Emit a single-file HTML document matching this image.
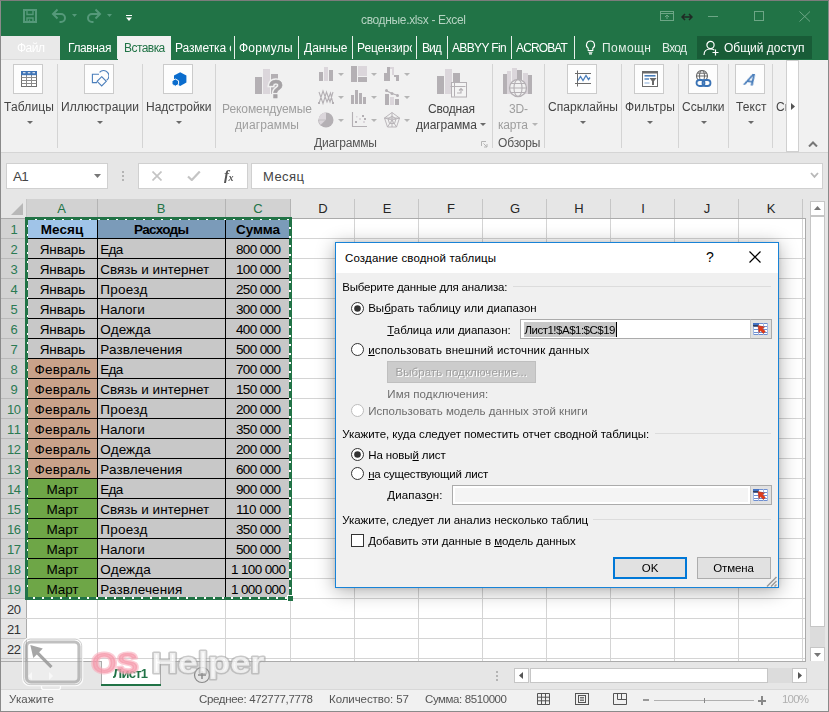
<!DOCTYPE html>
<html lang="ru"><head><meta charset="utf-8"><title>сводные.xlsx - Excel</title>
<style>
html,body{margin:0;padding:0;}
body{width:829px;height:712px;overflow:hidden;background:#e6e6e6;font-family:'Liberation Sans', sans-serif;position:relative;}
#app{position:absolute;left:0;top:0;width:829px;height:712px;overflow:hidden;}
#app div,#app svg,#app span.t{position:absolute;}
span.t{white-space:pre;line-height:16px;height:16px;}
u{text-decoration:underline;text-underline-offset:1px;}
</style></head><body><div id="app">
<div style="left:0px;top:0px;width:829px;height:712px;background:#e6e6e6;"></div>
<div style="left:0px;top:0px;width:829px;height:60px;background:#217346;"></div>
<div style="left:0px;top:0px;width:829px;height:1px;background:#7c7c7c;"></div>
<svg style="left:23px;top:9px;" width="14" height="14" viewBox="0 0 14 14"><path d="M1 1h12v12h-12z" fill="none" stroke="#55997a" stroke-width="2"/><path d="M4 1.500v4h6v-4 M4 12.500v-3.500h6v3.500 M6.500 10.500v2" fill="none" stroke="#55997a" stroke-width="1.400"/></svg>
<svg style="left:51px;top:8px;" width="16" height="16" viewBox="0 0 16 16"><path d="M6.500 1.500 L2 6 L6.500 10.500 M2.500 6 H10 a4 4 0 0 1 0 8 H8.500" fill="none" stroke="#55997a" stroke-width="2"/></svg>
<svg style="left:72px;top:14px;" width="5" height="3" viewBox="0 0 5 3"><path d="M0 0h5l-2.500 3z" fill="#55997a"/></svg>
<svg style="left:86px;top:8px;" width="16" height="16" viewBox="0 0 16 16"><path d="M9.500 1.500 L14 6 L9.500 10.500 M13.500 6 H6 a4 4 0 0 0 0 8 H7.500" fill="none" stroke="#55997a" stroke-width="2"/></svg>
<svg style="left:107px;top:14px;" width="5" height="3" viewBox="0 0 5 3"><path d="M0 0h5l-2.500 3z" fill="#55997a"/></svg>
<svg style="left:125.5px;top:15px;" width="6" height="6" viewBox="0 0 6 6"><path d="M0 0.500h6" stroke="#fff" stroke-width="1"/><path d="M0 2.500h6l-3 3.500z" fill="#fff"/></svg>
<span class="t" style="left:361.00px;top:12.44px;font-size:12px;color:#b5d3c2;letter-spacing:-0.347px;will-change:transform;">сводные.xlsx - Excel</span>
<svg style="left:660px;top:11px;" width="14" height="10" viewBox="0 0 14 10"><rect x="0.5" y="0.5" width="13" height="9" fill="none" stroke="#6da686"/><path d="M0.5 2.5h13" stroke="#6da686"/><path d="M7 8V4.5 M5 6l2-2 2 2" fill="none" stroke="#6da686"/></svg>
<svg style="left:681px;top:12px;" width="12" height="10" viewBox="0 0 12 10"><path d="M1 5h10 M4 2L1 5l3 3 M8 2l3 3-3 3" fill="none" stroke="#1f2a24" stroke-width="1.5"/></svg>
<div style="left:708px;top:16px;width:10px;height:1px;background:#6da686;"></div>
<div style="left:754px;top:11px;width:10px;height:10px;border:1px solid #6da686;box-sizing:border-box;"></div>
<svg style="left:799px;top:11px;" width="12" height="11" viewBox="0 0 12 11"><path d="M0.5 0.5l10.5 10 M11 0.5l-10.5 10" stroke="#6da686" stroke-width="1" fill="none"/></svg>
<div style="left:1px;top:36px;width:59px;height:24px;background:#e9e9e9;"></div>
<div style="left:1px;top:59px;width:59px;height:1px;background:#dadada;"></div>
<span class="t" style="left:16.50px;top:40.34px;font-size:12px;color:#ffffff;letter-spacing:-0.505px;will-change:transform;">Файл</span>
<span class="t" style="left:68.30px;top:40.34px;font-size:12px;color:#fff;letter-spacing:-0.381px;will-change:transform;">Главная</span>
<div style="left:118px;top:36px;width:53px;height:24px;background:#f1f1f1;"></div>
<span class="t" style="left:123.50px;top:40.34px;font-size:12px;color:#217346;letter-spacing:-0.552px;will-change:transform;">Вставка</span>
<div style="left:175px;top:36px;width:56px;height:24px;overflow:hidden;"><span class="t" style="will-change:transform;left:0.4px;top:4.3px;font-size:12px;color:#fff;letter-spacing:-0.1px">Разметка с</span></div>
<span class="t" style="left:239.30px;top:40.34px;font-size:12px;color:#fff;letter-spacing:0.23px;will-change:transform;">Формулы</span>
<span class="t" style="left:303.70px;top:40.34px;font-size:12px;color:#fff;letter-spacing:0.028px;will-change:transform;">Данные</span>
<div style="left:357px;top:36px;width:55px;height:24px;overflow:hidden;"><span class="t" style="will-change:transform;left:0.3px;top:4.3px;font-size:12px;color:#fff;letter-spacing:-0.1px">Рецензирование</span></div>
<span class="t" style="left:422.40px;top:40.34px;font-size:12px;color:#fff;letter-spacing:-0.959px;will-change:transform;">Вид</span>
<span class="t" style="left:451.90px;top:40.34px;font-size:12px;color:#fff;letter-spacing:-0.639px;will-change:transform;">ABBYY Fin</span>
<span class="t" style="left:516.30px;top:40.34px;font-size:12px;color:#fff;letter-spacing:-0.871px;will-change:transform;">ACROBAT</span>
<div style="left:117px;top:36px;width:1px;height:23px;background:#e8f0eb;"></div>
<div style="left:234px;top:36px;width:1px;height:23px;background:#e8f0eb;"></div>
<div style="left:298px;top:36px;width:1px;height:23px;background:#e8f0eb;"></div>
<div style="left:352px;top:36px;width:1px;height:23px;background:#e8f0eb;"></div>
<div style="left:416px;top:36px;width:1px;height:23px;background:#e8f0eb;"></div>
<div style="left:447px;top:36px;width:1px;height:23px;background:#e8f0eb;"></div>
<div style="left:511px;top:36px;width:1px;height:23px;background:#e8f0eb;"></div>
<div style="left:574px;top:36px;width:1px;height:23px;background:#e8f0eb;"></div>
<svg style="left:585px;top:39.5px;" width="11" height="15" viewBox="0 0 11 15"><path d="M5.5 1a4 4 0 0 0-2.300 7.300v2.200h4.600v-2.200A4 4 0 0 0 5.500 1z M3.500 12.300h4 M4 13.900h3" fill="none" stroke="#fff" stroke-width="1.100"/></svg>
<span class="t" style="left:601.80px;top:40.34px;font-size:12px;color:#e3eee8;letter-spacing:0.453px;will-change:transform;">Помощн</span>
<span class="t" style="left:662.20px;top:40.34px;font-size:12px;color:#e3eee8;letter-spacing:-0.719px;will-change:transform;">Вход</span>
<div style="left:697px;top:36px;width:115px;height:23px;background:#185c37;"></div>
<svg style="left:703px;top:40px;" width="17" height="16" viewBox="0 0 17 16"><circle cx="7.5" cy="5" r="3.6" fill="none" stroke="#fff" stroke-width="1.2"/><path d="M1 15c0-4 2.5-6 6.5-6 1.5 0 2.8 0.3 3.8 1" fill="none" stroke="#fff" stroke-width="1.2"/><path d="M12.5 9.5v6 M9.5 12.5h6" stroke="#fff" stroke-width="1.2"/></svg>
<span class="t" style="left:723.50px;top:40.34px;font-size:12px;color:#fff;letter-spacing:-0.011px;will-change:transform;">Общий доступ</span>
<div style="left:1px;top:60px;width:827px;height:92px;background:#f1f1f1;"></div>
<div style="left:1px;top:152px;width:827px;height:1px;background:#d5d5d5;"></div>
<div style="left:0px;top:1px;width:1px;height:711px;background:#8a8a8a;"></div>
<div style="left:828px;top:1px;width:1px;height:711px;background:#8a8a8a;"></div>
<div style="left:13px;top:64px;width:30px;height:30px;background:#fdfdfd;border:1px solid #cbcbcb;box-sizing:border-box;"></div>
<svg style="left:21px;top:71px;" width="16" height="16" viewBox="0 0 16 16"><rect x="0.5" y="0.5" width="15" height="15" fill="#fff" stroke="#6e6e6e"/><path d="M5.5 4v11.500 M10.500 4v11.500 M0.500 6.500h15 M0.500 9.500h15 M0.500 12.500h15" stroke="#8a8a8a" fill="none" stroke-width="1"/><rect x="0" y="0" width="16" height="4.200" fill="#3f74b6"/><path d="M2 1.800h2.500 M6.800 1.800h2.500 M11.500 1.800h2.500" stroke="#fff" stroke-width="1.100"/></svg>
<span class="t" style="left:4.00px;top:98.84px;font-size:12px;color:#444444;letter-spacing:0.164px;will-change:transform;">Таблицы</span>
<svg style="left:26.5px;top:121.0px;" width="6" height="3" viewBox="0 0 6 3"><path d="M0 0h6l-3 3z" fill="#6a6a6a"/></svg>
<div style="left:57px;top:64px;width:1px;height:84px;background:#d4d4d4;"></div>
<div style="left:84px;top:64px;width:30px;height:30px;background:#fdfdfd;border:1px solid #cbcbcb;box-sizing:border-box;"></div>
<svg style="left:91px;top:70px;" width="18" height="18" viewBox="0 0 18 18"><path d="M8.56 2.46A5.3 5.3 0 1 1 15.66 10.21" fill="none" stroke="#4a7ebb" stroke-width="1.1"/><path d="M8 4.3H1.4V12.6H6" fill="none" stroke="#4a7ebb" stroke-width="1.1"/><path d="M10.7 6.7l4.6 4.6-4.6 4.6-4.6-4.6z" fill="none" stroke="#4a7ebb" stroke-width="1.1"/></svg>
<span class="t" style="left:61.00px;top:98.84px;font-size:12px;color:#444444;letter-spacing:0.123px;will-change:transform;">Иллюстрации</span>
<svg style="left:97px;top:121.0px;" width="6" height="3" viewBox="0 0 6 3"><path d="M0 0h6l-3 3z" fill="#6a6a6a"/></svg>
<div style="left:142px;top:64px;width:1px;height:84px;background:#d4d4d4;"></div>
<div style="left:163px;top:64px;width:30px;height:30px;background:#fdfdfd;border:1px solid #cbcbcb;box-sizing:border-box;"></div>
<svg style="left:171px;top:71px;" width="16" height="16" viewBox="0 0 16 16"><path d="M9.2 1.2l6.2 3.4v7l-6.2 3.4-6.2-3.400v-7z" fill="#0a6ccd"/><path d="M4.300 8l3.300 1.800v3.600l-3.300 1.800-3.300-1.800v-3.600z" fill="#0a6ccd" stroke="#fdfdfd" stroke-width="1"/></svg>
<span class="t" style="left:146.25px;top:98.84px;font-size:12px;color:#444444;letter-spacing:-0.038px;will-change:transform;">Надстройки</span>
<svg style="left:176.3px;top:121.0px;" width="6" height="3" viewBox="0 0 6 3"><path d="M0 0h6l-3 3z" fill="#6a6a6a"/></svg>
<div style="left:215px;top:64px;width:1px;height:84px;background:#d4d4d4;"></div>
<svg style="left:254px;top:68px;will-change:transform;" width="30" height="32" viewBox="0 0 30 32"><rect x="1" y="9" width="7" height="17" fill="#b4b0b4"/><rect x="9" y="1" width="7" height="25" fill="#dbd6db"/><rect x="17" y="6" width="7" height="20" fill="#b4b0b4"/><text x="14.3" y="29.6" font-family="Liberation Sans, sans-serif" font-weight="bold" font-size="25" fill="#f1f1f1" stroke="#f1f1f1" stroke-width="3.5">?</text><text x="14.3" y="29.6" font-family="Liberation Sans, sans-serif" font-weight="bold" font-size="25" fill="#a5a2a5" stroke="#a5a2a5" stroke-width="0.5">?</text></svg>
<span class="t" style="left:222.00px;top:100.64px;font-size:12px;color:#9e9e9e;letter-spacing:-0.072px;will-change:transform;">Рекомендуемые</span>
<span class="t" style="left:235.00px;top:116.84px;font-size:12px;color:#9e9e9e;letter-spacing:0.096px;will-change:transform;">диаграммы</span>
<svg style="left:318px;top:66px;" width="16" height="16" viewBox="0 0 16 16"><rect x="1" y="6" width="4" height="9" fill="#b4b0b4"/><rect x="6" y="1" width="4" height="14" fill="#dbd6db"/><rect x="11" y="4" width="4" height="11" fill="#b4b0b4"/></svg>
<svg style="left:351px;top:66px;" width="16" height="16" viewBox="0 0 16 16"><rect x="0" y="0" width="6" height="16" fill="#b4b0b4"/><rect x="7" y="0" width="9" height="10" fill="#dbd6db"/><rect x="7" y="11" width="9" height="5" fill="#b4b0b4"/></svg>
<svg style="left:384px;top:66px;" width="16" height="16" viewBox="0 0 16 16"><path d="M0 15V7h3V1h3v14z" fill="#b4b0b4"/><path d="M6 1h4v8h-2v-6h-2z" fill="#dbd6db"/><path d="M10 9h5v6h-3v-4h-2z" fill="#b4b0b4"/></svg>
<svg style="left:318px;top:89px;" width="16" height="16" viewBox="0 0 16 16"><path d="M1 14.500L5 2l4 11 3.500-9 2.500 10.500 M1 3l4 11.500L8.500 3l3.500 10 3-10" fill="none" stroke="#b4b0b4" stroke-width="1.100"/><rect x="0" y="13" width="2" height="2" fill="#b4b0b4"/><rect x="14" y="13" width="2" height="2" fill="#b4b0b4"/></svg>
<svg style="left:351px;top:89px;" width="16" height="16" viewBox="0 0 16 16"><rect x="0" y="6" width="3" height="9" fill="#b4b0b4"/><rect x="4" y="1" width="3" height="14" fill="#b4b0b4"/><rect x="8" y="4" width="3" height="11" fill="#b4b0b4"/><rect x="12" y="8" width="3" height="7" fill="#b4b0b4"/></svg>
<svg style="left:384px;top:89px;" width="16" height="16" viewBox="0 0 16 16"><rect x="1" y="5" width="4" height="11" fill="#b4b0b4"/><rect x="6" y="8" width="4" height="8" fill="#dbd6db"/><rect x="11" y="10" width="4" height="6" fill="#b4b0b4"/><path d="M2 1.5l6 3 6 2" stroke="#b4b0b4" fill="none" stroke-width="1.2"/><circle cx="2.5" cy="1.5" r="1.5" fill="#b4b0b4"/><circle cx="8" cy="4.5" r="1.5" fill="#b4b0b4"/><circle cx="13.5" cy="6.5" r="1.5" fill="#b4b0b4"/></svg>
<svg style="left:318px;top:112px;" width="16" height="16" viewBox="0 0 16 16"><circle cx="8" cy="8" r="7.5" fill="#b4b0b4"/><path d="M8 8V0.5A7.5 7.5 0 0 0 0.5 8z" fill="#dbd6db"/><path d="M8 8H0.5a7.5 7.5 0 0 0 2 5.2z" fill="#dbd6db" stroke="#b4b0b4" stroke-width="0.6"/></svg>
<svg style="left:351px;top:112px;" width="16" height="16" viewBox="0 0 16 16"><path d="M1.5 0v14.5H16" fill="none" stroke="#b4b0b4" stroke-width="1.1"/><rect x="4" y="9" width="2" height="2" fill="#b4b0b4"/><rect x="8" y="6" width="2" height="2" fill="#dbd6db"/><rect x="11" y="3" width="2" height="2" fill="#b4b0b4"/><rect x="12" y="9" width="2" height="2" fill="#dbd6db"/><rect x="5" y="4" width="1.5" height="1.5" fill="#dbd6db"/><rect x="13" y="6" width="2" height="2" fill="#b4b0b4"/></svg>
<svg style="left:384px;top:112px;" width="16" height="16" viewBox="0 0 16 16"><path d="M8 0.5l7.5 5.5-3 9h-9l-3-9z M8 0.5v14.5 M0.5 6l15 0 M3.5 15L8 8l4.5 7 M0.5 6L8 8l7.5-2" fill="none" stroke="#b4b0b4" stroke-width="0.9"/><path d="M8 4l4 3-1.5 4.5h-5L4 7z" fill="none" stroke="#b4b0b4" stroke-width="0.9"/></svg>
<svg style="left:337.5px;top:73.0px;" width="6" height="3" viewBox="0 0 6 3"><path d="M0 0h6l-3 3z" fill="#b5b5b5"/></svg>
<svg style="left:370.5px;top:73.0px;" width="6" height="3" viewBox="0 0 6 3"><path d="M0 0h6l-3 3z" fill="#b5b5b5"/></svg>
<svg style="left:403.5px;top:73.0px;" width="6" height="3" viewBox="0 0 6 3"><path d="M0 0h6l-3 3z" fill="#b5b5b5"/></svg>
<svg style="left:337.5px;top:96.0px;" width="6" height="3" viewBox="0 0 6 3"><path d="M0 0h6l-3 3z" fill="#b5b5b5"/></svg>
<svg style="left:370.5px;top:96.0px;" width="6" height="3" viewBox="0 0 6 3"><path d="M0 0h6l-3 3z" fill="#b5b5b5"/></svg>
<svg style="left:403.5px;top:96.0px;" width="6" height="3" viewBox="0 0 6 3"><path d="M0 0h6l-3 3z" fill="#b5b5b5"/></svg>
<svg style="left:337.5px;top:119.0px;" width="6" height="3" viewBox="0 0 6 3"><path d="M0 0h6l-3 3z" fill="#b5b5b5"/></svg>
<svg style="left:370.5px;top:119.0px;" width="6" height="3" viewBox="0 0 6 3"><path d="M0 0h6l-3 3z" fill="#b5b5b5"/></svg>
<svg style="left:403.5px;top:119.0px;" width="6" height="3" viewBox="0 0 6 3"><path d="M0 0h6l-3 3z" fill="#b5b5b5"/></svg>
<span class="t" style="left:314.00px;top:135.44px;font-size:12px;color:#555;letter-spacing:-0.17px;will-change:transform;">Диаграммы</span>
<svg style="left:436px;top:68px;" width="32" height="30" viewBox="0 0 32 30"><rect x="1" y="8" width="7" height="18" fill="#b4b0b4"/><rect x="9" y="1" width="7" height="25" fill="#dbd6db"/><rect x="17" y="5" width="7" height="21" fill="#b4b0b4"/><rect x="15.5" y="14.5" width="15" height="14.5" fill="#f4f4f4" stroke="#b4b0b4"/><path d="M14.5 18.5h15 M18.5 14.5v14" stroke="#b4b0b4"/><path d="M21 25h4v-4 M23 22.5l2-2 2 2" fill="none" stroke="#b4b0b4" stroke-width="1.1"/></svg>
<span class="t" style="left:428.00px;top:100.84px;font-size:12px;color:#444444;letter-spacing:-0.188px;will-change:transform;">Сводная</span>
<span class="t" style="left:416.00px;top:116.84px;font-size:12px;color:#444444;letter-spacing:-0.035px;will-change:transform;">диаграмма</span>
<svg style="left:479.5px;top:123.0px;" width="6" height="3" viewBox="0 0 6 3"><path d="M0 0h6l-3 3z" fill="#6a6a6a"/></svg>
<svg style="left:481px;top:141px;" width="7" height="7" viewBox="0 0 7 7"><path d="M0.5 5V0.5H5" fill="none" stroke="#b4b4b4"/><path d="M2.5 2.5L6 6 M6 3v3H3" fill="none" stroke="#b4b4b4"/></svg>
<div style="left:492px;top:64px;width:1px;height:84px;background:#d4d4d4;"></div>
<svg style="left:503px;top:68px;" width="30" height="30" viewBox="0 0 30 30"><rect x="0" y="6" width="4" height="20" fill="#b4b0b4"/><rect x="4" y="3" width="4" height="23" fill="#dbd6db"/><rect x="9" y="0" width="5" height="26" fill="#dbd6db"/><rect x="14" y="2" width="5" height="24" fill="#b4b0b4"/><rect x="20" y="5" width="5" height="21" fill="#dbd6db"/><rect x="25" y="7" width="4" height="19" fill="#b4b0b4"/><circle cx="15" cy="20" r="8.5" fill="#f1f1f1" stroke="#b4b0b4" stroke-width="1.3"/><ellipse cx="15" cy="20" rx="4" ry="8.5" fill="none" stroke="#b4b0b4" stroke-width="1.1"/><path d="M6.5 20h17 M8 15.5h14 M8 24.5h14" stroke="#b4b0b4" stroke-width="1.1"/></svg>
<span class="t" style="left:508.50px;top:100.84px;font-size:12px;color:#9e9e9e;letter-spacing:-0.172px;will-change:transform;">3D-</span>
<span class="t" style="left:498.00px;top:116.84px;font-size:12px;color:#9e9e9e;letter-spacing:-0.16px;will-change:transform;">карта</span>
<svg style="left:531.5px;top:123.0px;" width="6" height="3" viewBox="0 0 6 3"><path d="M0 0h6l-3 3z" fill="#b5b5b5"/></svg>
<span class="t" style="left:497.50px;top:135.44px;font-size:12px;color:#555;letter-spacing:-0.159px;will-change:transform;">Обзоры</span>
<div style="left:544px;top:64px;width:1px;height:84px;background:#d4d4d4;"></div>
<div style="left:567px;top:64px;width:30px;height:30px;background:#fdfdfd;border:1px solid #cbcbcb;box-sizing:border-box;"></div>
<svg style="left:574px;top:70px;" width="17" height="17" viewBox="0 0 17 17"><path d="M3.500 0.500v16 M1 3.500h16 M1 13.500h16" stroke="#6a6a6a" fill="none"/><path d="M4 10.500l2.500-4 2.500 4 3-5 2.500 4 1.500-2" fill="none" stroke="#4a7ebb" stroke-width="1.300"/></svg>
<span class="t" style="left:548.00px;top:98.84px;font-size:12px;color:#444444;letter-spacing:0.052px;will-change:transform;">Спарклайны</span>
<svg style="left:580px;top:121.0px;" width="6" height="3" viewBox="0 0 6 3"><path d="M0 0h6l-3 3z" fill="#6a6a6a"/></svg>
<div style="left:621px;top:64px;width:1px;height:84px;background:#d4d4d4;"></div>
<div style="left:634px;top:64px;width:30px;height:30px;background:#fdfdfd;border:1px solid #cbcbcb;box-sizing:border-box;"></div>
<svg style="left:641.5px;top:71px;" width="16" height="16" viewBox="0 0 16 16"><rect x="0.500" y="0.500" width="15" height="15" fill="#fff" stroke="#6a6a6a"/><rect x="0" y="0" width="16" height="2.500" fill="#6a6a6a"/><path d="M2.500 4.800h11" stroke="#4a7ebb" stroke-width="1.600"/><path d="M2.500 8h4.500" stroke="#4a7ebb" stroke-width="1.400"/><path d="M2.500 12h5" stroke="#a9c4e4" stroke-width="1.400"/><path d="M7.500 7h7l-2.500 3.200v3.800h-2v-3.800z" fill="#6a6a6a"/></svg>
<span class="t" style="left:625.00px;top:98.84px;font-size:12px;color:#444444;letter-spacing:0.177px;will-change:transform;">Фильтры</span>
<svg style="left:647px;top:121.0px;" width="6" height="3" viewBox="0 0 6 3"><path d="M0 0h6l-3 3z" fill="#6a6a6a"/></svg>
<div style="left:678px;top:64px;width:1px;height:84px;background:#d4d4d4;"></div>
<div style="left:688px;top:64px;width:30px;height:30px;background:#fdfdfd;border:1px solid #cbcbcb;box-sizing:border-box;"></div>
<svg style="left:695px;top:70px;" width="17" height="18" viewBox="0 0 17 18"><circle cx="7" cy="6" r="5.500" fill="none" stroke="#666" stroke-width="1.100"/><ellipse cx="7" cy="6" rx="2.500" ry="5.500" fill="none" stroke="#666" stroke-width="1"/><path d="M1.500 6h11 M2.500 3.200h9" stroke="#666" stroke-width="1"/><rect x="1.500" y="10" width="8" height="6" rx="3" fill="#fdfdfd" stroke="#3a73b5" stroke-width="1.800"/><rect x="7.500" y="10" width="8" height="6" rx="3" fill="none" stroke="#3a73b5" stroke-width="1.800"/></svg>
<span class="t" style="left:682.25px;top:98.84px;font-size:12px;color:#444444;letter-spacing:0.05px;will-change:transform;">Ссылки</span>
<svg style="left:700.5px;top:121.0px;" width="6" height="3" viewBox="0 0 6 3"><path d="M0 0h6l-3 3z" fill="#6a6a6a"/></svg>
<div style="left:728px;top:64px;width:1px;height:84px;background:#d4d4d4;"></div>
<div style="left:735px;top:64px;width:30px;height:30px;background:#fdfdfd;border:1px solid #cbcbcb;box-sizing:border-box;"></div>
<span class="t" style="left:745.38px;top:71.60px;font-size:15px;color:#4a7ebb;font-weight:bold;font-style:italic;transform:skewX(-14deg) rotate(6deg);will-change:transform;">A</span>
<span class="t" style="left:735.75px;top:98.84px;font-size:12px;color:#444444;letter-spacing:0.07px;will-change:transform;">Текст</span>
<svg style="left:748px;top:121.0px;" width="6" height="3" viewBox="0 0 6 3"><path d="M0 0h6l-3 3z" fill="#6a6a6a"/></svg>
<div style="left:772px;top:64px;width:1px;height:84px;background:#d4d4d4;"></div>
<div style="left:775px;top:96px;width:12px;height:20px;overflow:hidden;"><span class="t" style="will-change:transform;left:1px;top:2.8px;font-size:12px;color:#444444">Символы</span></div>
<div style="left:786px;top:60px;width:13px;height:92px;background:#fff;border:1px solid #d0d0d0;box-sizing:border-box;"></div>
<svg style="left:790.5px;top:103px;" width="4" height="7" viewBox="0 0 4 7"><path d="M0 0l4 3.500-4 3.500z" fill="#555"/></svg>
<svg style="left:808px;top:141px;" width="10" height="6" viewBox="0 0 10 6"><path d="M1 5.500l4-4 4 4" fill="none" stroke="#777" stroke-width="2"/></svg>
<div style="left:6px;top:163px;width:102px;height:26px;background:#fff;border:1px solid #d0d0d0;box-sizing:border-box;"></div>
<span class="t" style="left:13.00px;top:168.62px;font-size:13.5px;color:#444;letter-spacing:-0.816px;">A1</span>
<svg style="left:93.5px;top:173.5px;" width="7" height="4" viewBox="0 0 7 4"><path d="M0 0h7l-3.5 4z" fill="#777"/></svg>
<div style="left:122px;top:171px;width:2px;height:2px;background:#b4b4b4;"></div>
<div style="left:122px;top:175px;width:2px;height:2px;background:#b4b4b4;"></div>
<div style="left:122px;top:179px;width:2px;height:2px;background:#b4b4b4;"></div>
<div style="left:138px;top:163px;width:110px;height:26px;background:#fff;border:1px solid #d0d0d0;box-sizing:border-box;"></div>
<svg style="left:152px;top:171px;" width="10" height="10" viewBox="0 0 10 10"><path d="M0.5 0.5l9 9 M9.5 0.5l-9 9" stroke="#c4c4c4" stroke-width="1.7" fill="none"/></svg>
<svg style="left:187px;top:171px;" width="14" height="10" viewBox="0 0 14 10"><path d="M1 5.5l3.8 3.5 8-8.5" stroke="#c4c4c4" stroke-width="2.2" fill="none"/></svg>
<span class="t" style="left:223.50px;top:167.30px;font-size:15px;color:#555;font-weight:bold;font-family:'Liberation Serif',serif;font-style:italic;will-change:transform;"><i>f</i><span style="font-size:10px;position:relative;top:0.5px;left:-0.5px">x</span></span>
<div style="left:251px;top:163px;width:572px;height:26px;background:#fff;border:1px solid #d0d0d0;box-sizing:border-box;"></div>
<span class="t" style="left:263.00px;top:169.00px;font-size:13px;color:#444;letter-spacing:0.449px;">Месяц</span>
<svg style="left:810px;top:172px;" width="9" height="7" viewBox="0 0 9 7"><path d="M1 1l3.5 3.8 3.5-3.8" fill="none" stroke="#b8b8b8" stroke-width="1.8"/></svg>
<div style="left:27px;top:219px;width:779px;height:442px;background:#fff;"></div>
<div style="left:1px;top:199px;width:805px;height:19px;background:#e6e6e6;"></div>
<div style="left:26px;top:199px;width:265px;height:19px;background:#d2d2d2;"></div>
<span class="t" style="left:57.16px;top:200.80px;font-size:13px;color:#217346;">A</span>
<span class="t" style="left:156.66px;top:200.80px;font-size:13px;color:#217346;">B</span>
<span class="t" style="left:253.30px;top:200.80px;font-size:13px;color:#217346;">C</span>
<span class="t" style="left:318.30px;top:200.80px;font-size:13px;color:#262626;">D</span>
<span class="t" style="left:382.66px;top:200.80px;font-size:13px;color:#262626;">E</span>
<span class="t" style="left:447.02px;top:200.80px;font-size:13px;color:#262626;">F</span>
<span class="t" style="left:509.94px;top:200.80px;font-size:13px;color:#262626;">G</span>
<span class="t" style="left:574.30px;top:200.80px;font-size:13px;color:#262626;">H</span>
<span class="t" style="left:641.19px;top:200.80px;font-size:13px;color:#262626;">I</span>
<span class="t" style="left:703.75px;top:200.80px;font-size:13px;color:#262626;">J</span>
<span class="t" style="left:766.66px;top:200.80px;font-size:13px;color:#262626;">K</span>
<div style="left:97px;top:199px;width:1px;height:19px;background:#b4b4b4;"></div>
<div style="left:225px;top:199px;width:1px;height:19px;background:#b4b4b4;"></div>
<div style="left:290px;top:199px;width:1px;height:19px;background:#b4b4b4;"></div>
<div style="left:354px;top:199px;width:1px;height:19px;background:#c6c6c6;"></div>
<div style="left:418px;top:199px;width:1px;height:19px;background:#c6c6c6;"></div>
<div style="left:482px;top:199px;width:1px;height:19px;background:#c6c6c6;"></div>
<div style="left:546px;top:199px;width:1px;height:19px;background:#c6c6c6;"></div>
<div style="left:610px;top:199px;width:1px;height:19px;background:#c6c6c6;"></div>
<div style="left:674px;top:199px;width:1px;height:19px;background:#c6c6c6;"></div>
<div style="left:738px;top:199px;width:1px;height:19px;background:#c6c6c6;"></div>
<div style="left:802px;top:199px;width:1px;height:19px;background:#c6c6c6;"></div>
<div style="left:26px;top:199px;width:1px;height:19px;background:#c6c6c6;"></div>
<div style="left:1px;top:218px;width:805px;height:1px;background:#ababab;"></div>
<svg style="left:11px;top:203px;" width="12" height="12" viewBox="0 0 12 12"><path d="M12 0v12H0z" fill="#b8b8b8"/></svg>
<div style="left:1px;top:219px;width:26px;height:442px;background:#e6e6e6;"></div>
<div style="left:1px;top:219px;width:26px;height:380px;background:#d2d2d2;"></div>
<span class="t" style="left:10.38px;top:221.50px;font-size:13px;color:#2a7a52;">1</span>
<div style="left:1px;top:238px;width:25px;height:1px;background:#b9b9b9;"></div>
<span class="t" style="left:10.38px;top:241.50px;font-size:13px;color:#2a7a52;">2</span>
<div style="left:1px;top:258px;width:25px;height:1px;background:#b9b9b9;"></div>
<span class="t" style="left:10.38px;top:261.50px;font-size:13px;color:#2a7a52;">3</span>
<div style="left:1px;top:278px;width:25px;height:1px;background:#b9b9b9;"></div>
<span class="t" style="left:10.38px;top:281.50px;font-size:13px;color:#2a7a52;">4</span>
<div style="left:1px;top:298px;width:25px;height:1px;background:#b9b9b9;"></div>
<span class="t" style="left:10.38px;top:301.50px;font-size:13px;color:#2a7a52;">5</span>
<div style="left:1px;top:318px;width:25px;height:1px;background:#b9b9b9;"></div>
<span class="t" style="left:10.38px;top:321.50px;font-size:13px;color:#2a7a52;">6</span>
<div style="left:1px;top:338px;width:25px;height:1px;background:#b9b9b9;"></div>
<span class="t" style="left:10.38px;top:341.50px;font-size:13px;color:#2a7a52;">7</span>
<div style="left:1px;top:358px;width:25px;height:1px;background:#b9b9b9;"></div>
<span class="t" style="left:10.38px;top:361.50px;font-size:13px;color:#2a7a52;">8</span>
<div style="left:1px;top:378px;width:25px;height:1px;background:#b9b9b9;"></div>
<span class="t" style="left:10.38px;top:381.50px;font-size:13px;color:#2a7a52;">9</span>
<div style="left:1px;top:398px;width:25px;height:1px;background:#b9b9b9;"></div>
<span class="t" style="left:7.10px;top:401.50px;font-size:13px;color:#2a7a52;letter-spacing:-0.669px;">10</span>
<div style="left:1px;top:418px;width:25px;height:1px;background:#b9b9b9;"></div>
<span class="t" style="left:7.10px;top:421.50px;font-size:13px;color:#2a7a52;letter-spacing:0.3px;">11</span>
<div style="left:1px;top:438px;width:25px;height:1px;background:#b9b9b9;"></div>
<span class="t" style="left:7.10px;top:441.50px;font-size:13px;color:#2a7a52;letter-spacing:-0.669px;">12</span>
<div style="left:1px;top:458px;width:25px;height:1px;background:#b9b9b9;"></div>
<span class="t" style="left:7.10px;top:461.50px;font-size:13px;color:#2a7a52;letter-spacing:-0.669px;">13</span>
<div style="left:1px;top:478px;width:25px;height:1px;background:#b9b9b9;"></div>
<span class="t" style="left:7.10px;top:481.50px;font-size:13px;color:#2a7a52;letter-spacing:-0.669px;">14</span>
<div style="left:1px;top:498px;width:25px;height:1px;background:#b9b9b9;"></div>
<span class="t" style="left:7.10px;top:501.50px;font-size:13px;color:#2a7a52;letter-spacing:-0.669px;">15</span>
<div style="left:1px;top:518px;width:25px;height:1px;background:#b9b9b9;"></div>
<span class="t" style="left:7.10px;top:521.50px;font-size:13px;color:#2a7a52;letter-spacing:-0.669px;">16</span>
<div style="left:1px;top:538px;width:25px;height:1px;background:#b9b9b9;"></div>
<span class="t" style="left:7.10px;top:541.50px;font-size:13px;color:#2a7a52;letter-spacing:-0.669px;">17</span>
<div style="left:1px;top:558px;width:25px;height:1px;background:#b9b9b9;"></div>
<span class="t" style="left:7.10px;top:561.50px;font-size:13px;color:#2a7a52;letter-spacing:-0.669px;">18</span>
<div style="left:1px;top:578px;width:25px;height:1px;background:#b9b9b9;"></div>
<span class="t" style="left:7.10px;top:581.50px;font-size:13px;color:#2a7a52;letter-spacing:-0.669px;">19</span>
<div style="left:1px;top:598px;width:25px;height:1px;background:#b9b9b9;"></div>
<span class="t" style="left:7.10px;top:601.50px;font-size:13px;color:#333;letter-spacing:-0.669px;">20</span>
<div style="left:1px;top:618px;width:25px;height:1px;background:#c6c6c6;"></div>
<span class="t" style="left:7.10px;top:621.50px;font-size:13px;color:#333;letter-spacing:-0.669px;">21</span>
<div style="left:1px;top:638px;width:25px;height:1px;background:#c6c6c6;"></div>
<span class="t" style="left:7.10px;top:641.50px;font-size:13px;color:#333;letter-spacing:-0.669px;">22</span>
<div style="left:1px;top:658px;width:25px;height:1px;background:#c6c6c6;"></div>
<div style="left:26px;top:219px;width:1px;height:442px;background:#ababab;"></div>
<div style="left:97px;top:219px;width:1px;height:442px;background:#d4d4d4;"></div>
<div style="left:225px;top:219px;width:1px;height:442px;background:#d4d4d4;"></div>
<div style="left:290px;top:219px;width:1px;height:442px;background:#d4d4d4;"></div>
<div style="left:354px;top:219px;width:1px;height:442px;background:#d4d4d4;"></div>
<div style="left:418px;top:219px;width:1px;height:442px;background:#d4d4d4;"></div>
<div style="left:482px;top:219px;width:1px;height:442px;background:#d4d4d4;"></div>
<div style="left:546px;top:219px;width:1px;height:442px;background:#d4d4d4;"></div>
<div style="left:610px;top:219px;width:1px;height:442px;background:#d4d4d4;"></div>
<div style="left:674px;top:219px;width:1px;height:442px;background:#d4d4d4;"></div>
<div style="left:738px;top:219px;width:1px;height:442px;background:#d4d4d4;"></div>
<div style="left:802px;top:219px;width:1px;height:442px;background:#d4d4d4;"></div>
<div style="left:26px;top:238px;width:780px;height:1px;background:#d4d4d4;"></div>
<div style="left:26px;top:258px;width:780px;height:1px;background:#d4d4d4;"></div>
<div style="left:26px;top:278px;width:780px;height:1px;background:#d4d4d4;"></div>
<div style="left:26px;top:298px;width:780px;height:1px;background:#d4d4d4;"></div>
<div style="left:26px;top:318px;width:780px;height:1px;background:#d4d4d4;"></div>
<div style="left:26px;top:338px;width:780px;height:1px;background:#d4d4d4;"></div>
<div style="left:26px;top:358px;width:780px;height:1px;background:#d4d4d4;"></div>
<div style="left:26px;top:378px;width:780px;height:1px;background:#d4d4d4;"></div>
<div style="left:26px;top:398px;width:780px;height:1px;background:#d4d4d4;"></div>
<div style="left:26px;top:418px;width:780px;height:1px;background:#d4d4d4;"></div>
<div style="left:26px;top:438px;width:780px;height:1px;background:#d4d4d4;"></div>
<div style="left:26px;top:458px;width:780px;height:1px;background:#d4d4d4;"></div>
<div style="left:26px;top:478px;width:780px;height:1px;background:#d4d4d4;"></div>
<div style="left:26px;top:498px;width:780px;height:1px;background:#d4d4d4;"></div>
<div style="left:26px;top:518px;width:780px;height:1px;background:#d4d4d4;"></div>
<div style="left:26px;top:538px;width:780px;height:1px;background:#d4d4d4;"></div>
<div style="left:26px;top:558px;width:780px;height:1px;background:#d4d4d4;"></div>
<div style="left:26px;top:578px;width:780px;height:1px;background:#d4d4d4;"></div>
<div style="left:26px;top:598px;width:780px;height:1px;background:#d4d4d4;"></div>
<div style="left:26px;top:618px;width:780px;height:1px;background:#d4d4d4;"></div>
<div style="left:26px;top:638px;width:780px;height:1px;background:#d4d4d4;"></div>
<div style="left:26px;top:658px;width:780px;height:1px;background:#d4d4d4;"></div>
<div style="left:805px;top:218px;width:1px;height:443px;background:#ababab;"></div>
<div style="left:26px;top:219px;width:72px;height:19px;background:#a0c4e8;"></div>
<div style="left:97px;top:219px;width:194px;height:19px;background:#7b9bb9;"></div>
<span class="t" style="left:40.75px;top:221.72px;font-size:13.5px;color:#000;letter-spacing:0.059px;font-weight:bold;">Месяц</span>
<span class="t" style="left:134.00px;top:221.72px;font-size:13.5px;color:#000;letter-spacing:-0.669px;font-weight:bold;">Расходы</span>
<span class="t" style="left:236.00px;top:221.72px;font-size:13.5px;color:#000;letter-spacing:-0.098px;font-weight:bold;">Сумма</span>
<div style="left:26px;top:239px;width:72px;height:19px;background:#c8c8c8;"></div>
<div style="left:98px;top:239px;width:191px;height:19px;background:#c8c8c8;"></div>
<span class="t" style="left:39.75px;top:241.72px;font-size:13.5px;color:#000;letter-spacing:-0.156px;">Январь</span>
<span class="t" style="left:100.30px;top:241.72px;font-size:13.5px;color:#000;letter-spacing:-0.695px;">Еда</span>
<span class="t" style="left:236.00px;top:241.72px;font-size:13.5px;color:#000;letter-spacing:-0.635px;">800 000</span>
<div style="left:26px;top:259px;width:72px;height:19px;background:#c8c8c8;"></div>
<div style="left:98px;top:259px;width:191px;height:19px;background:#c8c8c8;"></div>
<span class="t" style="left:39.75px;top:261.72px;font-size:13.5px;color:#000;letter-spacing:-0.156px;">Январь</span>
<span class="t" style="left:100.30px;top:261.72px;font-size:13.5px;color:#000;letter-spacing:-0.006px;">Связь и интернет</span>
<span class="t" style="left:236.00px;top:261.72px;font-size:13.5px;color:#000;letter-spacing:-0.635px;">100 000</span>
<div style="left:26px;top:279px;width:72px;height:19px;background:#c8c8c8;"></div>
<div style="left:98px;top:279px;width:191px;height:19px;background:#c8c8c8;"></div>
<span class="t" style="left:39.75px;top:281.72px;font-size:13.5px;color:#000;letter-spacing:-0.156px;">Январь</span>
<span class="t" style="left:100.30px;top:281.72px;font-size:13.5px;color:#000;letter-spacing:0.259px;">Проезд</span>
<span class="t" style="left:236.00px;top:281.72px;font-size:13.5px;color:#000;letter-spacing:-0.635px;">250 000</span>
<div style="left:26px;top:299px;width:72px;height:19px;background:#c8c8c8;"></div>
<div style="left:98px;top:299px;width:191px;height:19px;background:#c8c8c8;"></div>
<span class="t" style="left:39.75px;top:301.72px;font-size:13.5px;color:#000;letter-spacing:-0.156px;">Январь</span>
<span class="t" style="left:100.30px;top:301.72px;font-size:13.5px;color:#000;letter-spacing:-0.153px;">Налоги</span>
<span class="t" style="left:236.00px;top:301.72px;font-size:13.5px;color:#000;letter-spacing:-0.635px;">300 000</span>
<div style="left:26px;top:319px;width:72px;height:19px;background:#c8c8c8;"></div>
<div style="left:98px;top:319px;width:191px;height:19px;background:#c8c8c8;"></div>
<span class="t" style="left:39.75px;top:321.72px;font-size:13.5px;color:#000;letter-spacing:-0.156px;">Январь</span>
<span class="t" style="left:100.30px;top:321.72px;font-size:13.5px;color:#000;letter-spacing:0.128px;">Одежда</span>
<span class="t" style="left:236.00px;top:321.72px;font-size:13.5px;color:#000;letter-spacing:-0.635px;">400 000</span>
<div style="left:26px;top:339px;width:72px;height:19px;background:#c8c8c8;"></div>
<div style="left:98px;top:339px;width:191px;height:19px;background:#c8c8c8;"></div>
<span class="t" style="left:39.75px;top:341.72px;font-size:13.5px;color:#000;letter-spacing:-0.156px;">Январь</span>
<span class="t" style="left:100.30px;top:341.72px;font-size:13.5px;color:#000;letter-spacing:0.125px;">Развлечения</span>
<span class="t" style="left:236.00px;top:341.72px;font-size:13.5px;color:#000;letter-spacing:-0.635px;">500 000</span>
<div style="left:26px;top:359px;width:72px;height:19px;background:#c8a28a;"></div>
<div style="left:98px;top:359px;width:191px;height:19px;background:#c8c8c8;"></div>
<span class="t" style="left:34.50px;top:361.72px;font-size:13.5px;color:#000;letter-spacing:0.188px;">Февраль</span>
<span class="t" style="left:100.30px;top:361.72px;font-size:13.5px;color:#000;letter-spacing:-0.695px;">Еда</span>
<span class="t" style="left:236.00px;top:361.72px;font-size:13.5px;color:#000;letter-spacing:-0.635px;">700 000</span>
<div style="left:26px;top:379px;width:72px;height:19px;background:#c8a28a;"></div>
<div style="left:98px;top:379px;width:191px;height:19px;background:#c8c8c8;"></div>
<span class="t" style="left:34.50px;top:381.72px;font-size:13.5px;color:#000;letter-spacing:0.188px;">Февраль</span>
<span class="t" style="left:100.30px;top:381.72px;font-size:13.5px;color:#000;letter-spacing:-0.006px;">Связь и интернет</span>
<span class="t" style="left:236.00px;top:381.72px;font-size:13.5px;color:#000;letter-spacing:-0.635px;">150 000</span>
<div style="left:26px;top:399px;width:72px;height:19px;background:#c8a28a;"></div>
<div style="left:98px;top:399px;width:191px;height:19px;background:#c8c8c8;"></div>
<span class="t" style="left:34.50px;top:401.72px;font-size:13.5px;color:#000;letter-spacing:0.188px;">Февраль</span>
<span class="t" style="left:100.30px;top:401.72px;font-size:13.5px;color:#000;letter-spacing:0.259px;">Проезд</span>
<span class="t" style="left:236.00px;top:401.72px;font-size:13.5px;color:#000;letter-spacing:-0.635px;">200 000</span>
<div style="left:26px;top:419px;width:72px;height:19px;background:#c8a28a;"></div>
<div style="left:98px;top:419px;width:191px;height:19px;background:#c8c8c8;"></div>
<span class="t" style="left:34.50px;top:421.72px;font-size:13.5px;color:#000;letter-spacing:0.188px;">Февраль</span>
<span class="t" style="left:100.30px;top:421.72px;font-size:13.5px;color:#000;letter-spacing:-0.153px;">Налоги</span>
<span class="t" style="left:236.00px;top:421.72px;font-size:13.5px;color:#000;letter-spacing:-0.635px;">350 000</span>
<div style="left:26px;top:439px;width:72px;height:19px;background:#c8a28a;"></div>
<div style="left:98px;top:439px;width:191px;height:19px;background:#c8c8c8;"></div>
<span class="t" style="left:34.50px;top:441.72px;font-size:13.5px;color:#000;letter-spacing:0.188px;">Февраль</span>
<span class="t" style="left:100.30px;top:441.72px;font-size:13.5px;color:#000;letter-spacing:0.128px;">Одежда</span>
<span class="t" style="left:236.00px;top:441.72px;font-size:13.5px;color:#000;letter-spacing:-0.635px;">200 000</span>
<div style="left:26px;top:459px;width:72px;height:19px;background:#c8a28a;"></div>
<div style="left:98px;top:459px;width:191px;height:19px;background:#c8c8c8;"></div>
<span class="t" style="left:34.50px;top:461.72px;font-size:13.5px;color:#000;letter-spacing:0.188px;">Февраль</span>
<span class="t" style="left:100.30px;top:461.72px;font-size:13.5px;color:#000;letter-spacing:0.125px;">Развлечения</span>
<span class="t" style="left:236.00px;top:461.72px;font-size:13.5px;color:#000;letter-spacing:-0.635px;">600 000</span>
<div style="left:26px;top:479px;width:72px;height:19px;background:#6ea647;"></div>
<div style="left:98px;top:479px;width:191px;height:19px;background:#c8c8c8;"></div>
<span class="t" style="left:46.50px;top:481.72px;font-size:13.5px;color:#000;letter-spacing:-0.104px;">Март</span>
<span class="t" style="left:100.30px;top:481.72px;font-size:13.5px;color:#000;letter-spacing:-0.695px;">Еда</span>
<span class="t" style="left:236.00px;top:481.72px;font-size:13.5px;color:#000;letter-spacing:-0.635px;">900 000</span>
<div style="left:26px;top:499px;width:72px;height:19px;background:#6ea647;"></div>
<div style="left:98px;top:499px;width:191px;height:19px;background:#c8c8c8;"></div>
<span class="t" style="left:46.50px;top:501.72px;font-size:13.5px;color:#000;letter-spacing:-0.104px;">Март</span>
<span class="t" style="left:100.30px;top:501.72px;font-size:13.5px;color:#000;letter-spacing:-0.006px;">Связь и интернет</span>
<span class="t" style="left:236.00px;top:501.72px;font-size:13.5px;color:#000;letter-spacing:-0.469px;">110 000</span>
<div style="left:26px;top:519px;width:72px;height:19px;background:#6ea647;"></div>
<div style="left:98px;top:519px;width:191px;height:19px;background:#c8c8c8;"></div>
<span class="t" style="left:46.50px;top:521.72px;font-size:13.5px;color:#000;letter-spacing:-0.104px;">Март</span>
<span class="t" style="left:100.30px;top:521.72px;font-size:13.5px;color:#000;letter-spacing:0.259px;">Проезд</span>
<span class="t" style="left:236.00px;top:521.72px;font-size:13.5px;color:#000;letter-spacing:-0.635px;">350 000</span>
<div style="left:26px;top:539px;width:72px;height:19px;background:#6ea647;"></div>
<div style="left:98px;top:539px;width:191px;height:19px;background:#c8c8c8;"></div>
<span class="t" style="left:46.50px;top:541.72px;font-size:13.5px;color:#000;letter-spacing:-0.104px;">Март</span>
<span class="t" style="left:100.30px;top:541.72px;font-size:13.5px;color:#000;letter-spacing:-0.153px;">Налоги</span>
<span class="t" style="left:236.00px;top:541.72px;font-size:13.5px;color:#000;letter-spacing:-0.635px;">500 000</span>
<div style="left:26px;top:559px;width:72px;height:19px;background:#6ea647;"></div>
<div style="left:98px;top:559px;width:191px;height:19px;background:#c8c8c8;"></div>
<span class="t" style="left:46.50px;top:561.72px;font-size:13.5px;color:#000;letter-spacing:-0.104px;">Март</span>
<span class="t" style="left:100.30px;top:561.72px;font-size:13.5px;color:#000;letter-spacing:0.128px;">Одежда</span>
<span class="t" style="left:231.00px;top:561.72px;font-size:13.5px;color:#000;letter-spacing:-0.633px;">1 100 000</span>
<div style="left:26px;top:579px;width:72px;height:19px;background:#6ea647;"></div>
<div style="left:98px;top:579px;width:191px;height:19px;background:#c8c8c8;"></div>
<span class="t" style="left:46.50px;top:581.72px;font-size:13.5px;color:#000;letter-spacing:-0.104px;">Март</span>
<span class="t" style="left:100.30px;top:581.72px;font-size:13.5px;color:#000;letter-spacing:0.125px;">Развлечения</span>
<span class="t" style="left:231.00px;top:581.72px;font-size:13.5px;color:#000;letter-spacing:-0.633px;">1 000 000</span>
<div style="left:28px;top:238px;width:261px;height:1px;background:#000;"></div>
<div style="left:28px;top:258px;width:261px;height:1px;background:#000;"></div>
<div style="left:28px;top:278px;width:261px;height:1px;background:#000;"></div>
<div style="left:28px;top:298px;width:261px;height:1px;background:#000;"></div>
<div style="left:28px;top:318px;width:261px;height:1px;background:#000;"></div>
<div style="left:28px;top:338px;width:261px;height:1px;background:#000;"></div>
<div style="left:28px;top:358px;width:261px;height:1px;background:#000;"></div>
<div style="left:28px;top:378px;width:261px;height:1px;background:#000;"></div>
<div style="left:28px;top:398px;width:261px;height:1px;background:#000;"></div>
<div style="left:28px;top:418px;width:261px;height:1px;background:#000;"></div>
<div style="left:28px;top:438px;width:261px;height:1px;background:#000;"></div>
<div style="left:28px;top:458px;width:261px;height:1px;background:#000;"></div>
<div style="left:28px;top:478px;width:261px;height:1px;background:#000;"></div>
<div style="left:28px;top:498px;width:261px;height:1px;background:#000;"></div>
<div style="left:28px;top:518px;width:261px;height:1px;background:#000;"></div>
<div style="left:28px;top:538px;width:261px;height:1px;background:#000;"></div>
<div style="left:28px;top:558px;width:261px;height:1px;background:#000;"></div>
<div style="left:28px;top:578px;width:261px;height:1px;background:#000;"></div>
<div style="left:97px;top:220px;width:1px;height:377px;background:#000;"></div>
<div style="left:225px;top:220px;width:1px;height:377px;background:#000;"></div>
<div style="left:25px;top:217px;width:267px;height:383px;border:3px solid #217346;box-sizing:border-box;"></div>
<div style="left:28px;top:219px;width:261px;height:1px;background:repeating-linear-gradient(90deg,transparent 0 7px,#fff 7px 9px);background-position:0px 0;"></div>
<div style="left:28px;top:597px;width:261px;height:2px;background:repeating-linear-gradient(90deg,transparent 0 7px,#fff 7px 9px);background-position:-2px 0;"></div>
<div style="left:27px;top:220px;width:1px;height:376px;background:repeating-linear-gradient(180deg,transparent 0 7px,#fff 7px 9px);background-position:0 -2px;"></div>
<div style="left:289px;top:220px;width:2px;height:376px;background:repeating-linear-gradient(180deg,transparent 0 7px,#fff 7px 9px);background-position:0 0px;"></div>
<div style="left:287px;top:595px;width:6px;height:6px;background:#fff;"></div>
<div style="left:288px;top:596px;width:5px;height:5px;background:#217346;"></div>
<div style="left:806px;top:199px;width:22px;height:462px;background:#e6e6e6;"></div>
<div style="left:810px;top:201px;width:15px;height:15px;background:#fff;border:1px solid #c6c6c6;box-sizing:border-box;"></div>
<svg style="left:814px;top:206px;" width="7" height="4" viewBox="0 0 7 4"><path d="M0 4h7l-3.500-4z" fill="#777"/></svg>
<div style="left:810px;top:216px;width:15px;height:411px;background:#fff;border:1px solid #c6c6c6;box-sizing:border-box;"></div>
<div style="left:810px;top:627px;width:15px;height:20px;background:#dcdcdc;"></div>
<div style="left:810px;top:647px;width:15px;height:15px;background:#fff;border:1px solid #c6c6c6;box-sizing:border-box;"></div>
<svg style="left:814px;top:653px;" width="7" height="4" viewBox="0 0 7 4"><path d="M0 0h7l-3.500 4z" fill="#777"/></svg>
<div style="left:1px;top:661px;width:827px;height:28px;background:#e6e6e6;"></div>
<div style="left:1px;top:661px;width:805px;height:1px;background:#ababab;"></div>
<div style="left:101px;top:661px;width:60px;height:25px;background:#fff;border-left:1px solid #ababab;border-right:1px solid #ababab;box-sizing:border-box;"></div>
<div style="left:101px;top:684px;width:60px;height:2px;background:#217346;"></div>
<span class="t" style="left:113.30px;top:666.00px;font-size:13px;color:#217346;letter-spacing:-0.738px;font-weight:bold;will-change:transform;">Лист1</span>
<svg style="left:192.6px;top:665.8px;" width="18" height="18" viewBox="0 0 18 18"><circle cx="9" cy="9" r="7.500" fill="none" stroke="#8a8a8a" stroke-width="1.200"/><path d="M9 5v8 M5 9h8" stroke="#8a8a8a" stroke-width="1.500"/></svg>
<div style="left:496px;top:671px;width:2px;height:2px;background:#b4b4b4;"></div>
<div style="left:496px;top:675px;width:2px;height:2px;background:#b4b4b4;"></div>
<div style="left:496px;top:679px;width:2px;height:2px;background:#b4b4b4;"></div>
<div style="left:514px;top:668px;width:15px;height:15px;background:#fff;border:1px solid #c6c6c6;box-sizing:border-box;"></div>
<svg style="left:519px;top:672px;" width="4" height="7" viewBox="0 0 4 7"><path d="M4 0v7L0 3.500z" fill="#555"/></svg>
<div style="left:530px;top:668px;width:238px;height:15px;background:#fff;border:1px solid #c6c6c6;box-sizing:border-box;"></div>
<div style="left:768px;top:668px;width:24px;height:15px;background:#dcdcdc;"></div>
<div style="left:792px;top:668px;width:15px;height:15px;background:#fff;border:1px solid #c6c6c6;box-sizing:border-box;"></div>
<svg style="left:798px;top:672px;" width="4" height="7" viewBox="0 0 4 7"><path d="M0 0v7l4-3.500z" fill="#555"/></svg>
<div style="left:1px;top:689px;width:827px;height:22px;background:#f1f1f1;"></div>
<div style="left:1px;top:689px;width:827px;height:1px;background:#d8d8d8;"></div>
<div style="left:0px;top:711px;width:829px;height:1px;background:#8a8a8a;"></div>
<span class="t" style="left:9.00px;top:690.92px;font-size:11.5px;color:#555;letter-spacing:0.146px;will-change:transform;">Укажите</span>
<span class="t" style="left:199.00px;top:690.92px;font-size:11.5px;color:#555;letter-spacing:-0.329px;will-change:transform;">Среднее: 472777,7778</span>
<span class="t" style="left:329.00px;top:690.92px;font-size:11.5px;color:#555;letter-spacing:-0.073px;will-change:transform;">Количество: 57</span>
<span class="t" style="left:425.00px;top:690.92px;font-size:11.5px;color:#555;letter-spacing:-0.407px;will-change:transform;">Сумма: 8510000</span>
<svg style="left:537px;top:693px;" width="14" height="13" viewBox="0 0 14 13"><path d="M0.500 0.500h12v11h-12z M4.500 0.500v11 M8.500 0.500v11 M0.500 4.200h12 M0.500 7.800h12" fill="none" stroke="#555"/></svg>
<svg style="left:575px;top:693px;" width="14" height="13" viewBox="0 0 14 13"><rect x="0.500" y="0.500" width="13" height="11" fill="none" stroke="#555"/><rect x="3.500" y="2.500" width="7" height="7" fill="none" stroke="#555"/><path d="M5 4.500h4 M5 6h4 M5 7.500h4" stroke="#555" stroke-width="0.800"/></svg>
<svg style="left:613px;top:693px;" width="14" height="13" viewBox="0 0 14 13"><path d="M0.500 0.500h13v11h-13z M4.500 0.500v6h9 M8.500 0.500v6" fill="none" stroke="#555"/></svg>
<div style="left:643px;top:699px;width:6px;height:2px;background:#999;"></div>
<div style="left:654px;top:700px;width:100px;height:1px;background:#b0b0b0;"></div>
<div style="left:704px;top:698px;width:1px;height:5px;background:#888;"></div>
<div style="left:758px;top:700px;width:8px;height:1px;background:#888;height:2px;"></div>
<div style="left:761px;top:696px;width:2px;height:9px;background:#888;"></div>
<span class="t" style="left:782.00px;top:690.92px;font-size:11.5px;color:#b0b0b0;letter-spacing:-0.807px;will-change:transform;">100%</span>
<svg style="left:20px;top:634px;" width="70" height="60" viewBox="0 0 70 60"><rect x="2.700" y="4.200" width="60" height="47.500" rx="7" fill="rgba(255,255,255,0.300)" stroke="rgba(255,255,255,0.850)" stroke-width="1.200"/><rect x="3.700" y="5.200" width="58" height="45.500" rx="6.500" fill="none" stroke="rgba(175,175,175,0.600)" stroke-width="1"/><rect x="6.500" y="8" width="52.500" height="40" rx="4.500" fill="none" stroke="rgba(150,150,150,0.600)" stroke-width="3.200"/><path d="M10.300 11l12.500 3.500-3.700 3.700 13.500 13.800-2.300 2.300-13.500-13.800-3.500 3.500z" fill="rgba(150,150,150,0.850)"/><path d="M12 38l-4 4 4 4z M29 38l4 4-4 4z" fill="rgba(255,255,255,0.600)"/><path d="M21.500 52v1.500q0 2 2 2h15q2 0 2-2V52" fill="none" stroke="rgba(255,255,255,0.900)" stroke-width="1.200"/></svg>
<svg style="left:86px;top:640px" width="190" height="44" viewBox="0 0 190 44"><text x="5.500" y="33" font-family="Liberation Sans, sans-serif" font-weight="bold" font-size="30" textLength="47" lengthAdjust="spacingAndGlyphs" fill="rgba(245,150,168,0.700)" stroke="rgba(248,170,185,0.600)" stroke-width="3" stroke-linejoin="round" paint-order="stroke fill">OS</text><text x="65.500" y="33" font-family="Liberation Sans, sans-serif" font-weight="bold" font-size="30" textLength="113" lengthAdjust="spacingAndGlyphs" fill="rgba(255,255,255,0.720)" stroke="rgba(165,165,165,0.600)" stroke-width="3" stroke-linejoin="round" paint-order="stroke fill">Helper</text></svg>
<div style="left:335px;top:242px;width:444px;height:346px;background:#f0f0f0;border:1px solid #1883d7;box-sizing:border-box;box-shadow:0 3px 18px rgba(0,0,0,0.330), 0 0 4px rgba(0,0,0,0.120);"></div>
<div style="left:336px;top:243px;width:442px;height:30px;background:#fff;"></div>
<span class="t" style="left:345.00px;top:250.02px;font-size:11.5px;color:#000;letter-spacing:0.147px;">Создание сводной таблицы</span>
<span class="t" style="left:706.10px;top:249.15px;font-size:14px;color:#000;">?</span>
<svg style="left:749px;top:251px;" width="12" height="12" viewBox="0 0 12 12"><path d="M0.500 0.500l11 11 M11.500 0.500l-11 11" stroke="#000" stroke-width="1.200" fill="none"/></svg>
<span class="t" style="left:342.20px;top:279.22px;font-size:11.5px;color:#000;letter-spacing:-0.173px;">Выберите данные для анализа:</span>
<div style="left:513px;top:286px;width:258px;height:1px;background:#dcdcdc;"></div>
<svg style="left:351px;top:301.5px;" width="13" height="13" viewBox="0 0 13 13"><circle cx="6.500" cy="6.500" r="6" fill="#fff" stroke="#333" stroke-width="1"/><circle cx="6.500" cy="6.500" r="3.300" fill="#333"/></svg>
<span class="t" style="left:368.20px;top:300.02px;font-size:11.5px;color:#000;letter-spacing:0.002px;">Вы<u>б</u>рать таблицу или диапазон</span>
<span class="t" style="left:387.30px;top:321.72px;font-size:11.5px;color:#000;letter-spacing:-0.038px;"><u>Т</u>аблица или диапазон:</span>
<div style="left:520px;top:319px;width:252px;height:20px;background:#fff;border:1px solid #ababab;box-sizing:border-box;"></div>
<div style="left:524px;top:322px;width:92px;height:15px;background:#c8c8c8;"></div>
<span class="t" style="left:524.50px;top:321.72px;font-size:11.5px;color:#000;letter-spacing:-0.502px;">Лист1!$A$1:$C$19</span>
<div style="left:616px;top:322px;width:1px;height:15px;background:#000;"></div>
<div style="left:750px;top:319px;width:22px;height:20px;background:#e1e1e1;border:1px solid #ababab;box-sizing:border-box;border-left-color:#c8c8c8;"></div>
<svg style="left:753px;top:323px;" width="15" height="12" viewBox="0 0 15 12"><rect x="0" y="0" width="15" height="12" fill="#fff"/><path d="M0 0.500h15 M0 3.500h15 M0 6.500h15 M0 9.500h15 M0 11.500h15" stroke="#6f8fd0" fill="none"/><path d="M0.500 0v12 M5.500 0v12 M10.500 0v12 M14.500 0v12" stroke="#9fb6e2" fill="none"/><rect x="0" y="0" width="6" height="2" fill="#4472c4"/><rect x="0" y="2" width="5" height="1.500" fill="#2f3f5f"/><path d="M5 2.500l6.500 1.500-2 1.600 2.800 2.800-2 2-2.800-2.800-1.500 2z" fill="#e03a1a" stroke="#b02a14" stroke-width="0.500"/></svg>
<svg style="left:351px;top:343.1px;" width="13" height="13" viewBox="0 0 13 13"><circle cx="6.500" cy="6.500" r="6" fill="#fff" stroke="#333" stroke-width="1"/></svg>
<span class="t" style="left:368.20px;top:342.02px;font-size:11.5px;color:#000;letter-spacing:0.14px;"><u>и</u>спользовать внешний источник данных</span>
<div style="left:387px;top:361px;width:149px;height:22px;background:#cccccc;border:1px solid #bfbfbf;box-sizing:border-box;"></div>
<span class="t" style="left:395.50px;top:363.62px;font-size:11.5px;color:#a0a0a0;letter-spacing:0.072px;text-shadow:1px 1px 0 #fff;">Выбрать подключение...</span>
<span class="t" style="left:387.30px;top:386.22px;font-size:11.5px;color:#6d6d6d;letter-spacing:0.099px;">Имя подключения:</span>
<svg style="left:351px;top:404.2px;" width="13" height="13" viewBox="0 0 13 13"><circle cx="6.500" cy="6.500" r="6" fill="#fff" stroke="#bcbcbc" stroke-width="1"/></svg>
<span class="t" style="left:368.20px;top:403.22px;font-size:11.5px;color:#6d6d6d;letter-spacing:0.039px;">Использовать модель данных этой книги</span>
<span class="t" style="left:342.20px;top:426.02px;font-size:11.5px;color:#000;letter-spacing:-0.041px;">Укажите, куда следует поместить отчет сводной таблицы:</span>
<div style="left:655px;top:433px;width:116px;height:1px;background:#dcdcdc;"></div>
<svg style="left:351px;top:448.3px;" width="13" height="13" viewBox="0 0 13 13"><circle cx="6.500" cy="6.500" r="6" fill="#fff" stroke="#333" stroke-width="1"/><circle cx="6.500" cy="6.500" r="3.300" fill="#333"/></svg>
<span class="t" style="left:368.20px;top:446.82px;font-size:11.5px;color:#000;letter-spacing:-0.108px;">На новы<u>й</u> лист</span>
<svg style="left:351px;top:466.9px;" width="13" height="13" viewBox="0 0 13 13"><circle cx="6.500" cy="6.500" r="6" fill="#fff" stroke="#333" stroke-width="1"/></svg>
<span class="t" style="left:368.20px;top:466.02px;font-size:11.5px;color:#000;letter-spacing:-0.215px;"><u>н</u>а существующий лист</span>
<span class="t" style="left:387.30px;top:487.02px;font-size:11.5px;color:#000;letter-spacing:0.127px;">Диапаз<u>о</u>н:</span>
<div style="left:452px;top:485px;width:320px;height:20px;background:#f4f4f4;border:1px solid #ababab;box-sizing:border-box;"></div>
<div style="left:453px;top:486px;width:297px;height:18px;border:2px solid #fff;box-sizing:border-box;"></div>
<div style="left:750px;top:485px;width:22px;height:20px;background:#e1e1e1;border:1px solid #ababab;box-sizing:border-box;border-left-color:#c8c8c8;"></div>
<svg style="left:753px;top:489px;" width="15" height="12" viewBox="0 0 15 12"><rect x="0" y="0" width="15" height="12" fill="#fff"/><path d="M0 0.500h15 M0 3.500h15 M0 6.500h15 M0 9.500h15 M0 11.500h15" stroke="#6f8fd0" fill="none"/><path d="M0.500 0v12 M5.500 0v12 M10.500 0v12 M14.500 0v12" stroke="#9fb6e2" fill="none"/><rect x="0" y="0" width="6" height="2" fill="#4472c4"/><rect x="0" y="2" width="5" height="1.500" fill="#2f3f5f"/><path d="M5 2.500l6.500 1.500-2 1.600 2.800 2.800-2 2-2.800-2.800-1.500 2z" fill="#e03a1a" stroke="#b02a14" stroke-width="0.500"/></svg>
<span class="t" style="left:342.20px;top:511.82px;font-size:11.5px;color:#000;letter-spacing:-0.038px;">Укажите, следует ли анализ несколько таблиц</span>
<div style="left:593px;top:519px;width:178px;height:1px;background:#dcdcdc;"></div>
<div style="left:351px;top:534px;width:13px;height:13px;background:#fff;border:1px solid #333;box-sizing:border-box;"></div>
<span class="t" style="left:368.20px;top:533.02px;font-size:11.5px;color:#000;letter-spacing:-0.07px;">Добавить эти данные в <u>м</u>одель данных</span>
<div style="left:613px;top:557px;width:74px;height:22px;background:#e1e1e1;border:2px solid #0078d7;box-sizing:border-box;"></div>
<span class="t" style="left:641.69px;top:559.82px;font-size:11.5px;color:#000;">OK</span>
<div style="left:697px;top:557px;width:74px;height:22px;background:#e1e1e1;border:1px solid #adadad;box-sizing:border-box;"></div>
<span class="t" style="left:713.15px;top:559.82px;font-size:11.5px;color:#000;letter-spacing:-0.113px;">Отмена</span>
<svg style="left:766px;top:576px;" width="11" height="11" viewBox="0 0 11 11"><path d="M10.500 1L1 10.500 M10.500 5L5 10.500 M10.500 8.500L8.500 10.500" stroke="#9a9a9a" stroke-width="1.500" fill="none"/></svg>
</div></body></html>
